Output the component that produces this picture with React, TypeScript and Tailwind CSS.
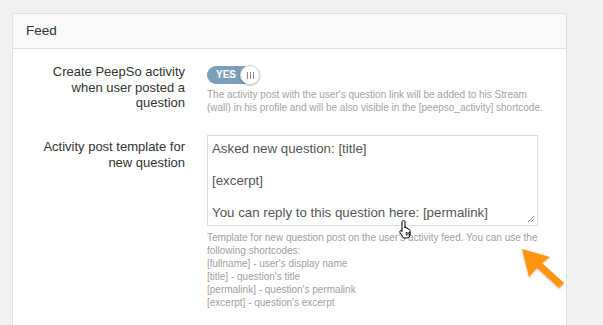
import React from "react";

const Toggle = () => (
  <div className="relative w-[53px] h-[18px]">
    <div className="absolute left-0 top-0 w-[50px] h-[18px] rounded-full bg-[#7b9fba] flex items-center pl-[9px]">
      <span className="text-[10px] font-bold text-white leading-none">YES</span>
    </div>
    <div className="absolute right-0 top-[-1px] w-[20px] h-[20px] rounded-full bg-white border border-[#d6d6d6] shadow-[0_1px_2px_rgba(0,0,0,0.25)] flex items-center justify-center gap-[2px]">
      <span className="w-px h-[7px] bg-[#8a8a8a]" />
      <span className="w-px h-[7px] bg-[#8a8a8a]" />
      <span className="w-px h-[7px] bg-[#8a8a8a]" />
    </div>
  </div>
);

const HandCursor = () => (
  <svg width="16" height="20" viewBox="0 0 16 20" className="absolute left-[399px] top-[219px]">
    <path
      d="M4.5 1.5c.9 0 1.5.6 1.5 1.5v6l.2-1c.9 0 1.5.5 1.6 1.3l.1-.3c.9 0 1.5.5 1.6 1.3.9-.1 1.6.5 1.6 1.4v3.8c0 2-1.5 3.5-3.5 3.5H6.1c-1.1 0-2-.5-2.6-1.4L1 13.6c-.5-.7-.3-1.5.4-1.9.6-.3 1.3-.1 1.7.4L3 12.5V3c0-.9.6-1.5 1.5-1.5z"
      fill="#fff"
      stroke="#000"
      strokeWidth="1"
      strokeLinejoin="round"
    />
    <path d="M7.3 13v3.5M9 13v3.5M10.7 13v3.5" stroke="#000" strokeWidth="0.9" />
  </svg>
);

const OrangeArrow = () => (
  <svg width="60" height="50" viewBox="0 0 60 50" className="absolute left-[515px] top-[244px]">
    <defs>
      <filter id="sh" x="-20%" y="-20%" width="140%" height="140%">
        <feDropShadow dx="0" dy="1" stdDeviation="1" floodColor="#000" floodOpacity="0.25" />
      </filter>
    </defs>
    <g filter="url(#sh)">
      <polygon points="7,5 35,13 27,19 49,39 44,44 22,24 14,33" fill="#ff9510" />
    </g>
  </svg>
);

export default function App() {
  return (
    <div className="relative w-[603px] h-[325px] bg-[#f1f1f1] overflow-hidden pt-[13px] pl-[12px] font-['Liberation_Sans',Arial,sans-serif]">
      <div className="w-[555px] h-[330px] bg-white border border-[#e1e1e1]">
        <div className="h-[35px] bg-[#f9f9f9] border-b border-[#e1e1e1] flex items-center pl-[13px]">
          <span className="text-[13.5px] text-[#333]">Feed</span>
        </div>

        <div className="pt-[15px] flex flex-col gap-[21px]">
          <div className="flex gap-[22px]">
            <div className="w-[172px] shrink-0 text-right text-[13px] leading-[15.5px] text-[#333]">
              Create PeepSo activity<br />
              when user posted a<br />
              question
            </div>
            <div className="flex-1 pr-[14px] pt-[2px]">
              <Toggle />
              <p className="mt-[4px] text-[10px] leading-[13px] text-[#a3a3a3]">
                The activity post with the user's question link will be added to his Stream
                (wall) in his profile and will be also visible in the [peepso_activity] shortcode.
              </p>
            </div>
          </div>

          <div className="flex gap-[22px]">
            <div className="w-[172px] shrink-0 text-right text-[13px] leading-[15.5px] text-[#333] pt-[4px]">
              Activity post template for<br />
              new question
            </div>
            <div className="flex-1 pr-[14px]">
              <div className="relative w-[331px] h-[91px] border border-[#dcdcdc] px-[4px] pt-[5px] text-[13.3px] leading-[16px] text-[#555]">
                <div>Asked new question: [title]</div>
                <div>&nbsp;</div>
                <div>[excerpt]</div>
                <div>&nbsp;</div>
                <div>You can reply to this question here: [permalink]</div>
                <svg width="8" height="8" viewBox="0 0 8 8" className="absolute right-[2px] bottom-[2px]">
                  <path d="M1 7L7 1M4 7L7 4" stroke="#777" strokeWidth="0.8" />
                </svg>
              </div>
              <p className="mt-[5px] w-[332px] text-[10px] leading-[13px] text-[#a0a0a0]">
                Template for new question post on the user's activity feed. You can use the
                following shortcodes:<br />
                [fullname] - user's display name<br />
                [title] - question's title<br />
                [permalink] - question's permalink<br />
                [excerpt] - question's excerpt
              </p>
            </div>
          </div>
        </div>
      </div>
      <HandCursor />
      <OrangeArrow />
    </div>
  );
}
